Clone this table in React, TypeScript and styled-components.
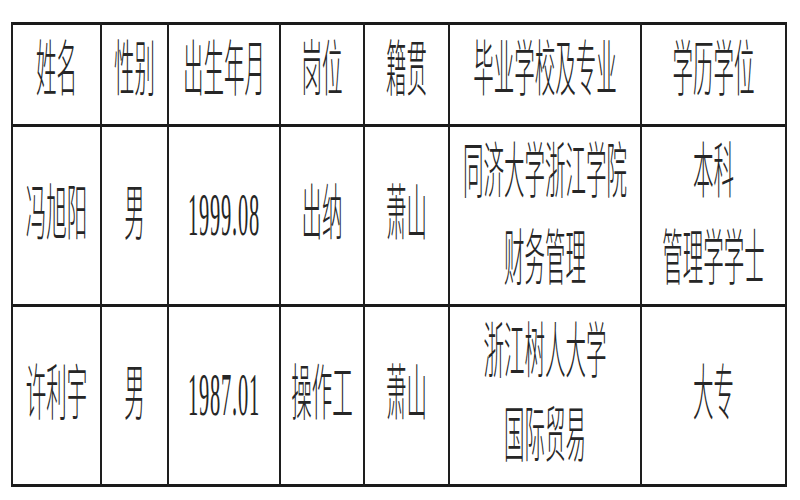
import React from 'react'
import styled, { createGlobalStyle } from 'styled-components'

const GlobalStyle = createGlobalStyle`
  html, body {
    margin: 0;
    padding: 0;
    background: #ffffff;
  }
  body {
    font-family: "Liberation Serif", "Noto Sans CJK SC", serif;
  }
`

const Page = styled.div`
  width: 800px;
  height: 500px;
  padding: 22px 0 0 11px;
  box-sizing: border-box;
  overflow: hidden;
`

// the reference is a vertically stretched scan of a document table
const Stretch = styled.div`
  width: 774px;
  transform: scaleY(3);
  transform-origin: 0 0;
`

const Table = styled.table`
  width: 774px;
  table-layout: fixed;
  border-collapse: collapse;
  font-size: 20.5px;
  color: #262626;
`

const Row = styled.tr<{ $h: number }>`
  height: ${({ $h }) => $h}px;
`

const Cell = styled.td<{ $head?: boolean }>`
  border-left: 2px solid #1e1e1e;
  border-right: 2px solid #1e1e1e;
  border-top: 1.5px solid #1a1a1a;
  border-bottom: 1.5px solid #1a1a1a;
  padding: 0 0 ${({ $head }) => ($head ? 3 : 0)}px;
  text-align: center;
  vertical-align: middle;
  line-height: 28.5px;
  font-weight: 300;
  white-space: nowrap;
`

const Num = styled.span`
  letter-spacing: 0.8px;
`

const Line = styled.div``

const widths = [89, 67, 112, 84, 85, 192, 145]
const headers = ['姓名', '性别', '出生年月', '岗位', '籍贯', '毕业学校及专业', '学历学位']

type Person = {
  name: string
  sex: string
  born: string
  post: string
  home: string
  school: string[]
  degree: string[]
}

const people: Person[] = [
  {
    name: '冯旭阳',
    sex: '男',
    born: '1999.08',
    post: '出纳',
    home: '萧山',
    school: ['同济大学浙江学院', '财务管理'],
    degree: ['本科', '管理学学士'],
  },
  {
    name: '许利宇',
    sex: '男',
    born: '1987.01',
    post: '操作工',
    home: '萧山',
    school: ['浙江树人大学', '国际贸易'],
    degree: ['大专'],
  },
]

const App: React.FC = () => {
  return (
    <>
      <GlobalStyle />
      <Page>
        <Stretch>
          <Table>
            <colgroup>
              {widths.map((w, i) => (
                <col key={i} style={{ width: w }} />
              ))}
            </colgroup>
            <tbody>
              <Row $h={34.4}>
                {headers.map((h) => (
                  <Cell key={h} $head>
                    {h}
                  </Cell>
                ))}
              </Row>
              {people.map((p) => (
                <Row key={p.name} $h={59.6}>
                  <Cell>{p.name}</Cell>
                  <Cell>{p.sex}</Cell>
                  <Cell>
                    <Num>{p.born}</Num>
                  </Cell>
                  <Cell>{p.post}</Cell>
                  <Cell>{p.home}</Cell>
                  <Cell>
                    {p.school.map((s) => (
                      <Line key={s}>{s}</Line>
                    ))}
                  </Cell>
                  <Cell>
                    {p.degree.map((d) => (
                      <Line key={d}>{d}</Line>
                    ))}
                  </Cell>
                </Row>
              ))}
            </tbody>
          </Table>
        </Stretch>
      </Page>
    </>
  )
}

export default App
